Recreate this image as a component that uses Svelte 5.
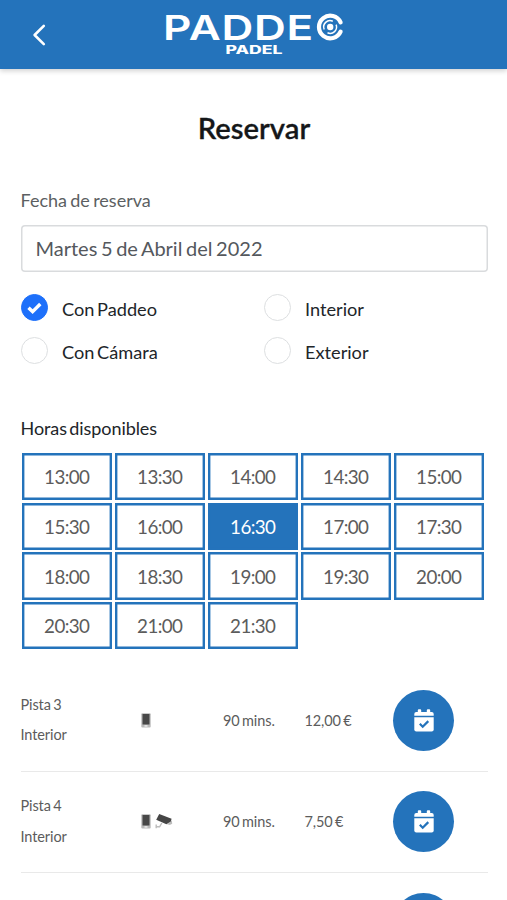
<script lang="ts">
	interface Court {
		id: number;
		name: string;
		kind: string;
		camera: boolean;
		duration: string;
		price: string;
	}

	const hours = [
		'13:00', '13:30', '14:00', '14:30', '15:00',
		'15:30', '16:00', '16:30', '17:00', '17:30',
		'18:00', '18:30', '19:00', '19:30', '20:00',
		'20:30', '21:00', '21:30'
	];

	const courts: Court[] = [
		{ id: 3, name: 'Pista 3', kind: 'Interior', camera: false, duration: '90 mins.', price: '12,00 €' },
		{ id: 4, name: 'Pista 4', kind: 'Interior', camera: true, duration: '90 mins.', price: '7,50 €' },
		{ id: 5, name: '', kind: '', camera: false, duration: '', price: '' }
	];

	let filters = $state([
		{ label: 'Con Paddeo', checked: true },
		{ label: 'Interior', checked: false },
		{ label: 'Con Cámara', checked: false },
		{ label: 'Exterior', checked: false }
	]);

	let selectedHour = $state('16:30');
</script>

<div class="screen">
	<header class="topbar">
		<button class="back" aria-label="Volver">
			<svg width="14" height="24" viewBox="0 0 14 24">
				<path d="M11.8 2.8 2.6 12l9.2 9.2" fill="none" stroke="#fff" stroke-width="2.6" stroke-linecap="round" stroke-linejoin="round" />
			</svg>
		</button>
		<svg class="logo" width="184" height="56" viewBox="0 -4 184 56">
			<text class="brand" x="1" y="30.5" textLength="151" lengthAdjust="spacingAndGlyphs">PADDE</text>
			<g fill="none" stroke="#fff">
				<path d="M178.6 13.4A11.3 11.3 0 1 0 178.6 22.6" stroke-width="4.2" stroke-linecap="round" />
				<path d="M162.2 20.5A6.4 6.4 0 0 1 170.8 12.2M174.1 15.6A6.4 6.4 0 0 1 165.5 23.8" stroke-width="1.5" />
			</g>
			<circle cx="168.2" cy="18" r="3.2" fill="#fff" />
			<text class="sub" x="63.5" y="45.2" textLength="57" lengthAdjust="spacingAndGlyphs">PADEL</text>
		</svg>
	</header>

	<main>
		<h1>Reservar</h1>

		<div class="label">Fecha de reserva</div>
		<div class="date">Martes 5 de Abril del 2022</div>

		<div class="filters">
			{#each filters as filter (filter.label)}
				<button class="filter" onclick={() => (filter.checked = !filter.checked)}>
					<span class="check" class:checked={filter.checked}>
						{#if filter.checked}
							<svg width="15" height="12" viewBox="0 0 15 12">
								<path d="M1.5 5.8 5.6 9.6 13.3 2" fill="none" stroke="#fff" stroke-width="3.4" />
							</svg>
						{/if}
					</span>
					<span class="filterName">{filter.label}</span>
				</button>
			{/each}
		</div>

		<h2>Horas disponibles</h2>
		<div class="hours">
			{#each hours as hour (hour)}
				<button class="hour" class:selected={hour === selectedHour} onclick={() => (selectedHour = hour)}>{hour}</button>
			{/each}
		</div>

		<div class="courts">
			{#each courts as court (court.id)}
				<div class="court">
					<div class="name">
						<span>{court.name}</span>
						<span>{court.kind}</span>
					</div>
					<div class="icons">
						{#if court.name}
							<svg width="10" height="15" viewBox="0 0 10 15">
								<rect x="0.3" y="0.3" width="9.4" height="14.2" rx="1" fill="#b9b9b9" />
								<rect x="1.5" y="1" width="7" height="10.5" fill="#484848" />
								<rect x="3.5" y="12.4" width="3" height="1.1" fill="#fff" />
							</svg>
						{/if}
						{#if court.camera}
							<svg width="18" height="15" viewBox="0 0 18 15">
								<path d="M1.2 10.6v3.6M1.2 12.8h3.4L6.8 9" fill="none" stroke="#bcbcbc" stroke-width="1.4" />
								<path d="m12 10.2 4.8-3.8.4 3.4-2.4 1.2z" fill="#bcbcbc" />
								<path d="M4.2 0 16.6 4.8 15.8 7.6l-4.4 2.6L1.2 5.8z" fill="#464646" />
							</svg>
						{/if}
					</div>
					<div>{court.duration}</div>
					<div>{court.price}</div>
					<button class="book" aria-label="Reservar pista">
						<svg width="20" height="23" viewBox="0 0 20 23">
							<path d="M.3 6.7V5a2 2 0 0 1 2-2h1.5V1.3a1 1 0 0 1 1-1h1.4a1 1 0 0 1 1 1V3h5.6V1.3a1 1 0 0 1 1-1h1.4a1 1 0 0 1 1 1V3h1.5a2 2 0 0 1 2 2v1.7z" fill="#fff" />
							<path d="M.3 8.2h19.4v12.2a2 2 0 0 1-2 2H2.3a2 2 0 0 1-2-2z" fill="#fff" />
							<path d="m5.8 14.8 2.9 2.9 5.6-5.6" fill="none" stroke="#2473bb" stroke-width="2.2" />
						</svg>
					</button>
				</div>
			{/each}
		</div>
	</main>
</div>

<style>
	:global(body) {
		margin: 0;
		background: #fff;
	}

	.screen {
		box-sizing: border-box;
		height: 900px;
		overflow: hidden;
		font-family: Lato, sans-serif;
		color: #212529;
	}

	button {
		padding: 0;
		border: 0;
		background: none;
		color: inherit;
		font: inherit;
		letter-spacing: inherit;
		word-spacing: inherit;
		cursor: pointer;
	}

	.topbar {
		display: grid;
		grid-template-columns: 1fr auto 1fr;
		height: 69px;
		background: #2473bb;
		box-shadow: 0 2px 5px rgba(0, 0, 0, 0.18);
	}

	.back {
		justify-self: start;
		margin-left: 32px;
		line-height: 0;
	}

	.logo {
		margin-top: 5px;
		overflow: visible;
	}

	.brand {
		fill: #fff;
		font: 600 34.5px Inter, sans-serif;
		letter-spacing: 0.6px;
	}

	.sub {
		fill: #fff;
		font: 800 11.2px Inter, sans-serif;
	}

	main {
		padding: 0 19.5px 0 20.5px;
	}

	h1 {
		margin: 42px 0 0;
		font-size: 29.2px;
		font-weight: 600;
		line-height: 34px;
		text-align: center;
		color: #151719;
		-webkit-text-stroke: 0.3px #151719;
	}

	.label {
		margin-top: 43px;
		font-size: 18px;
		line-height: 24px;
		word-spacing: -1.3px;
		color: #5c5f62;
	}

	.date {
		box-sizing: border-box;
		height: 47px;
		margin-top: 13px;
		padding-left: 15px;
		border-radius: 4px;
		box-shadow: inset 0 0 0 1.5px #d9dbdd;
		font-size: 20px;
		line-height: 47px;
		word-spacing: -1.5px;
		color: #54585d;
	}

	.filters {
		display: grid;
		grid-template-columns: 243px 1fr;
		row-gap: 16px;
		margin-top: 22px;
	}

	.filter {
		display: flex;
		align-items: center;
		gap: 14.5px;
		height: 27px;
		font-size: 18.2px;
		word-spacing: -2px;
	}

	.check {
		display: flex;
		align-items: center;
		justify-content: center;
		box-sizing: border-box;
		width: 27px;
		height: 27px;
		border: 1px solid #dddfe1;
		border-radius: 50%;
	}

	.check.checked {
		border-color: #1e70fa;
		background: #1e70fa;
	}

	.filterName {
		padding-top: 3px;
	}

	h2 {
		margin: 52px 0 0;
		font-size: 18px;
		font-weight: 400;
		line-height: 24px;
		letter-spacing: -0.07px;
		word-spacing: -2.2px;
	}

	.hours {
		display: grid;
		grid-template-columns: repeat(5, 90.5px);
		grid-auto-rows: 47.3px;
		gap: 2.4px 2.5px;
		margin: 13px 0 0 1px;
	}

	.hour {
		box-shadow: inset 0 0 0 2.4px #2473bb;
		font-size: 18.8px;
		letter-spacing: -0.6px;
		color: #5c5c5c;
	}

	.hour.selected {
		background: #2473bb;
		color: #fff;
	}

	.courts {
		margin-top: 20.6px;
		font-size: 14.5px;
		letter-spacing: -0.1px;
		word-spacing: -1.2px;
		color: #5c5c5c;
	}

	.court {
		display: grid;
		grid-template-columns: 120px 82.5px 81.5px 88.5px 61px;
		align-items: center;
		box-sizing: border-box;
		height: 101.6px;
		border-bottom: 1.5px solid #e9e9e9;
	}

	.name {
		display: flex;
		flex-direction: column;
		line-height: 30.5px;
	}

	.icons {
		display: flex;
		gap: 4px;
	}

	.book {
		display: flex;
		align-items: center;
		justify-content: center;
		width: 61px;
		height: 61px;
		border-radius: 50%;
		background: #2473bb;
	}
</style>
